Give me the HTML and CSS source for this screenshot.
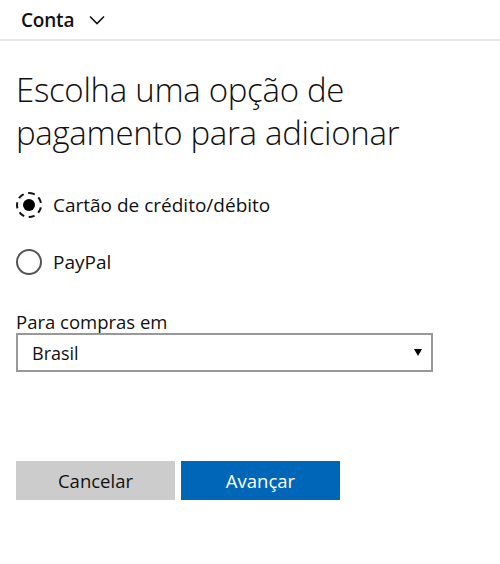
FILE: index.html
```html
<!DOCTYPE html>
<html lang="pt-BR">
<head>
<meta charset="utf-8">
<link rel="stylesheet" href="styles.css">
</head>
<body>
<header class="topbar">
  <span class="topbar-title">Conta</span>
  <svg class="chev" width="16" height="10" viewBox="0 0 16 10"><path d="M1 1.5 L8 8.5 L15 1.5" fill="none" stroke="#111" stroke-width="1.6"/></svg>
</header>
<main class="content">
  <h1 class="title">Escolha uma opção de pagamento para adicionar</h1>
  <div class="options">
    <div class="option">
      <span class="radio radio-checked"><span class="dot"></span></span>
      <span class="option-label">Cartão de crédito/débito</span>
    </div>
    <div class="option">
      <span class="radio"></span>
      <span class="option-label">PayPal</span>
    </div>
  </div>
  <div class="field">
    <div class="field-label">Para compras em</div>
    <div class="select">
      <span>Brasil</span>
      <span class="arrow"></span>
    </div>
  </div>
  <div class="actions">
    <button class="btn btn-secondary">Cancelar</button>
    <button class="btn btn-primary">Avançar</button>
  </div>
</main>
</body>
</html>
```
FILE: styles.css
```css
html, body {
  margin: 0;
  padding: 0;
  background: #fff;
  font-family: "Open Sans", "Noto Sans", sans-serif;
  color: #000;
}
.topbar {
  height: 41px;
  border-bottom: 2px solid #e8e8e8;
  display: flex;
  align-items: center;
  padding-left: 21px;
  gap: 15px;
  box-sizing: border-box;
}
.topbar-title {
  font-size: 19px;
  font-weight: 600;
  letter-spacing: -0.2px;
  color: #111;
}
.chev { margin-top: 1px; }
.content {
  padding: 0 16px;
}
.title {
  margin: 27px 0 0 0;
  font-weight: 300;
  font-size: 33px;
  line-height: 43px;
  letter-spacing: -0.3px;
  width: 440px;
  color: #111;
}
.options {
  margin-top: 38px;
  display: flex;
  flex-direction: column;
  gap: 31px;
}
.option {
  display: flex;
  align-items: center;
  gap: 11px;
  height: 26px;
}
.radio {
  width: 26px;
  height: 26px;
  box-sizing: border-box;
  border: 2.5px solid #555;
  border-radius: 50%;
  display: flex;
  align-items: center;
  justify-content: center;
}
.radio-checked {
  border: 2.5px dashed #111;
}
.dot {
  width: 12px;
  height: 12px;
  border-radius: 50%;
  background: #000;
}
.option-label {
  font-size: 19px;
  color: #111;
}
.field {
  margin-top: 36px;
}
.field-label {
  font-size: 18.5px;
  line-height: 22px;
  color: #111;
}
.select {
  width: 417px;
  height: 39px;
  box-sizing: border-box;
  border: 2px solid #999;
  display: flex;
  align-items: center;
  justify-content: space-between;
  padding: 0 9px 0 14px;
  font-size: 18px;
  color: #111;
}
.arrow {
  width: 0;
  height: 0;
  border-left: 4px solid transparent;
  border-right: 4px solid transparent;
  border-top: 7px solid #000;
}
.actions {
  margin-top: 89px;
  display: flex;
  gap: 6px;
}
.btn {
  width: 159px;
  height: 39px;
  border: none;
  font-family: inherit;
  font-size: 18.5px;
  padding: 0;
}
.btn-secondary {
  background: #cccccc;
  color: #111;
}
.btn-primary {
  background: #0067b8;
  color: #fff;
}
```
